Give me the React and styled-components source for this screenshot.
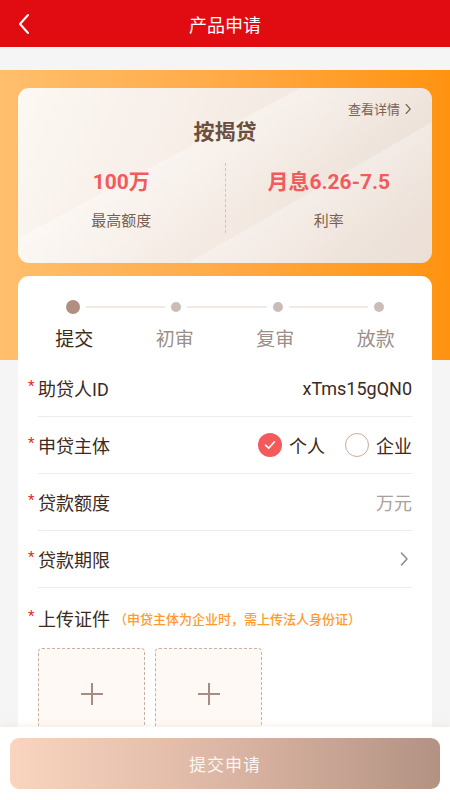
import React from "react"
import styled, { createGlobalStyle } from "styled-components"

const GlobalStyle = createGlobalStyle`
  * {
    box-sizing: border-box;
  }
  body {
    margin: 0;
    background: #f5f5f5;
    font-family: "Roboto", "Noto Sans CJK SC", sans-serif;
    color: #3c2a20;
  }
`

const Page = styled.div`
  min-height: 800px;
  background: #f5f5f5;
  padding-bottom: 90px;
`

const NavBar = styled.header`
  height: 48px;
  background: #e10c12;
  display: flex;
  align-items: center;
  justify-content: center;
  position: relative;
  color: #fff;
  font-size: 18px;
  border-bottom: 1px solid #fff;
`

const BackButton = styled.button`
  position: absolute;
  left: 12px;
  top: 10px;
  width: 24px;
  height: 28px;
  padding: 0;
  border: 0;
  background: none;
  display: flex;
  align-items: center;
  justify-content: center;
`

const Spacer = styled.div`
  height: 22px;
  background: #f5f5f5;
`

const Hero = styled.section`
  padding: 18px 18px 97px;
  background: linear-gradient(90deg, #ffbf6d 0%, #ffaa46 50%, #ff9310 100%);
`

const ProductCard = styled.div`
  position: relative;
  height: 175px;
  border-radius: 11px;
  overflow: hidden;
  background:
    linear-gradient(152deg, rgba(255, 255, 255, 0) 0%, rgba(255, 255, 255, 0) 38%, rgba(255, 255, 255, 0.35) 38%, rgba(255, 255, 255, 0) 62%),
    linear-gradient(150deg, rgba(255, 255, 255, 0) 66%, rgba(255, 255, 255, 0.28) 66%, rgba(255, 255, 255, 0) 88%),
    linear-gradient(115deg, #fdf8f3 0%, #f5ece5 45%, #ebdfd6 100%);
  padding-top: 30px;
`

const DetailLink = styled.a`
  position: absolute;
  top: 11px;
  right: 18px;
  font-size: 13px;
  color: #7b6253;
  display: flex;
  align-items: center;
  gap: 2px;
  text-decoration: none;
`

const ProductName = styled.h2`
  margin: 0;
  text-align: center;
  font-size: 21px;
  font-weight: 700;
  color: #6b4e3d;
  line-height: 28px;
`

const Stats = styled.div`
  margin-top: 17px;
  display: grid;
  grid-template-columns: 1fr 1px 1fr;
  height: 70px;
`

const Stat = styled.div`
  display: flex;
  flex-direction: column;
  align-items: center;
  padding-top: 6px;
  gap: 16px;
`

const StatValue = styled.div`
  font-size: 21px;
  font-weight: 700;
  color: #f25a5c;
  line-height: 26px;
`

const StatLabel = styled.div`
  font-size: 15px;
  color: #7a5f50;
  line-height: 20px;
`

const StatDivider = styled.div`
  border-left: 1px dashed #cfc3bb;
`

const FormCard = styled.section`
  position: relative;
  margin: -84px 18px 0;
  background: #fff;
  border-radius: 11px;
  padding-bottom: 20px;
`

const StepTrack = styled.div`
  display: flex;
  align-items: center;
  padding: 24px 48px 0;
  height: 38px;
`

const Dot = styled.span`
  flex: none;
  width: ${p => (p.$active ? 14 : 10)}px;
  height: ${p => (p.$active ? 14 : 10)}px;
  border-radius: 50%;
  background: ${p => (p.$active ? "#b08e82" : "#cbbdb5")};
`

const TrackLine = styled.span`
  flex: 1;
  height: 2px;
  margin: 0 6px;
  background: #f2e9e4;
`

const StepLabels = styled.div`
  display: grid;
  grid-template-columns: repeat(4, 1fr);
  padding: 13px 6px 7px;
`

const StepLabel = styled.div`
  text-align: center;
  font-size: 19px;
  line-height: 26px;
  color: ${p => (p.$active ? "#3d2b22" : "#9a8f89")};
`

const Row = styled.div`
  margin: 0 20px;
  height: 57px;
  display: flex;
  align-items: center;
  justify-content: space-between;
  border-bottom: 1px solid #f0ebe8;
`

const Label = styled.div`
  display: flex;
  align-items: center;
  font-size: 18px;
  color: #3c2a20;
  white-space: nowrap;
`

const Star = styled.span`
  flex: none;
  width: 10px;
  margin-left: -10px;
  color: #e8281f;
  font-size: 15px;
  line-height: 15px;
  position: relative;
  top: -2px;
`

const Hint = styled.span`
  margin-left: 4px;
  font-size: 13px;
  font-weight: 500;
  color: #ff9a30;
`

const Value = styled.div`
  font-size: 18px;
  color: ${p => (p.$muted ? "#a8a09a" : "#3c2a20")};
`

const Choices = styled.div`
  display: flex;
  align-items: center;
  gap: 20px;
`

const Choice = styled.label`
  display: flex;
  align-items: center;
  gap: 7px;
  font-size: 18px;
  color: #3c2a20;
`

const Radio = styled.span`
  width: 24px;
  height: 24px;
  border-radius: 50%;
  display: flex;
  align-items: center;
  justify-content: center;
  background: ${p => (p.$checked ? "#f25a5c" : "#fff")};
  border: ${p => (p.$checked ? "none" : "1.5px solid #c9ab9c")};
`

const UploadSection = styled.div`
  margin: 0 20px;
`

const UploadHead = styled(Label)`
  height: 60px;
`

const UploadGrid = styled.div`
  display: flex;
  gap: 10px;
`

const UploadBox = styled.button`
  width: 107px;
  height: 107px;
  padding: 0;
  border: 1.5px dashed #c9afa2;
  border-radius: 4px;
  background: #fef9f5;
  display: flex;
  align-items: flex-start;
  justify-content: center;
  padding-top: 33px;
`

const BottomBar = styled.footer`
  position: fixed;
  left: 0;
  right: 0;
  bottom: 0;
  height: 73px;
  background: #fff;
  padding: 11px 10px 0;
  box-shadow: 0 -2px 6px rgba(240, 200, 180, 0.25);
`

const SubmitButton = styled.button`
  width: 100%;
  height: 51px;
  border: 0;
  border-radius: 9px;
  background: linear-gradient(90deg, #f9d5bf 0%, #dcb6a4 50%, #b39283 100%);
  color: rgba(255, 255, 255, 0.88);
  font-family: "Noto Sans CJK SC", sans-serif;
  font-size: 17px;
  letter-spacing: 1px;
`

const Chevron = ({ color = "#8d8d8d", size = 16, width = 1.6 }) => (
  <svg width={size} height={size} viewBox="0 0 16 16" fill="none">
    <path d="M5.5 2 L11 8 L5.5 14" stroke={color} strokeWidth={width} strokeLinecap="round" strokeLinejoin="round" />
  </svg>
)

const Plus = () => (
  <svg width="24" height="24" viewBox="0 0 24 24">
    <path d="M12 1 V23 M1 12 H23" stroke="#a58d83" strokeWidth="2" />
  </svg>
)

const steps = ["提交", "初审", "复审", "放款"]

const App = () => (
  <Page>
    <GlobalStyle />
    <NavBar>
      <BackButton aria-label="返回">
        <svg width="14" height="22" viewBox="0 0 14 22" fill="none">
          <path d="M11 2 L3 11 L11 20" stroke="#fff" strokeWidth="2" strokeLinecap="round" strokeLinejoin="round" />
        </svg>
      </BackButton>
      产品申请
    </NavBar>
    <Spacer />

    <Hero>
      <ProductCard>
        <DetailLink href="#">
          查看详情
          <Chevron color="#7b6253" size={12} width={1.5} />
        </DetailLink>
        <ProductName>按揭贷</ProductName>
        <Stats>
          <Stat>
            <StatValue>100万</StatValue>
            <StatLabel>最高额度</StatLabel>
          </Stat>
          <StatDivider />
          <Stat>
            <StatValue>月息6.26-7.5</StatValue>
            <StatLabel>利率</StatLabel>
          </Stat>
        </Stats>
      </ProductCard>
    </Hero>

    <FormCard>
      <StepTrack>
        <Dot $active />
        <TrackLine />
        <Dot />
        <TrackLine />
        <Dot />
        <TrackLine />
        <Dot />
      </StepTrack>
      <StepLabels>
        {steps.map((s, i) => (
          <StepLabel key={s} $active={i === 0}>
            {s}
          </StepLabel>
        ))}
      </StepLabels>

      <Row>
        <Label>
          <Star>*</Star>助贷人ID
        </Label>
        <Value>xTms15gQN0</Value>
      </Row>
      <Row>
        <Label>
          <Star>*</Star>申贷主体
        </Label>
        <Choices>
          <Choice>
            <Radio $checked>
              <svg width="14" height="14" viewBox="0 0 14 14" fill="none">
                <path d="M2.5 7.2 L5.7 10.2 L11.5 3.8" stroke="#fff" strokeWidth="1.6" strokeLinecap="round" strokeLinejoin="round" />
              </svg>
            </Radio>
            个人
          </Choice>
          <Choice>
            <Radio />
            企业
          </Choice>
        </Choices>
      </Row>
      <Row>
        <Label>
          <Star>*</Star>贷款额度
        </Label>
        <Value $muted>万元</Value>
      </Row>
      <Row>
        <Label>
          <Star>*</Star>贷款期限
        </Label>
        <Chevron />
      </Row>

      <UploadSection>
        <UploadHead>
          <Star>*</Star>上传证件
          <Hint>（申贷主体为企业时，需上传法人身份证）</Hint>
        </UploadHead>
        <UploadGrid>
          <UploadBox aria-label="上传证件正面">
            <Plus />
          </UploadBox>
          <UploadBox aria-label="上传证件反面">
            <Plus />
          </UploadBox>
        </UploadGrid>
      </UploadSection>
    </FormCard>

    <BottomBar>
      <SubmitButton>提交申请</SubmitButton>
    </BottomBar>
  </Page>
)

export default App
